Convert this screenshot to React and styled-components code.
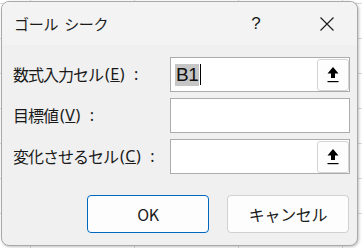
import React from 'react';
import styled, { createGlobalStyle } from 'styled-components';

const GlobalStyle = createGlobalStyle`
  html, body {
    margin: 0;
    padding: 0;
  }
  body {
    font-family: "Noto Sans CJK JP", "Noto Sans", sans-serif;
    color: #1a1a1a;
  }
`;

const Desktop = styled.div`
  width: 362px;
  height: 248px;
  box-sizing: border-box;
  padding: 1px 0 0 1px;
  background-color: #ffffff;
  background-image:
    repeating-linear-gradient(90deg, transparent 0 30px, #dadada 30px 31px, transparent 31px 104px),
    repeating-linear-gradient(0deg, transparent 0 34px, #dadada 34px 35px);
  overflow: hidden;
`;

const Window = styled.div`
  width: 357px;
  height: 245px;
  box-sizing: border-box;
  border: 1px solid #a9a9a9;
  border-radius: 8px;
  overflow: hidden;
  display: flex;
  flex-direction: column;
  background: #f0f0f0;
  box-shadow: 1px 1px 3px rgba(0, 0, 0, 0.25);
`;

const TitleBar = styled.div`
  height: 43px;
  flex: none;
  display: flex;
  align-items: center;
  background: #f3f3f3;
  padding-left: 12px;
`;

const Title = styled.div`
  flex: 1;
  font-size: 15px;
  word-spacing: 3px;
  letter-spacing: -0.3px;
  color: #1a1a1a;
`;

const HelpMark = styled.div`
  width: 20px;
  margin-right: 53px;
  text-align: center;
  font-family: "Liberation Sans", sans-serif;
  font-size: 17px;
  color: #1a1a1a;
`;

const CloseIcon = styled.svg`
  width: 16px;
  height: 16px;
  margin-right: 22px;
  display: block;
`;

const Body = styled.div`
  flex: 1;
  display: flex;
  flex-direction: column;
  padding: 12px 7px 0 11px;
`;

const Form = styled.div`
  display: grid;
  grid-template-columns: 1fr 180px;
  grid-auto-rows: 35px;
  row-gap: 6px;
`;

const Label = styled.label`
  display: flex;
  align-items: center;
  font-size: 16px;
  color: #1a1a1a;
  white-space: nowrap;
  padding-bottom: 1px;
`;

const Text = styled.span`
  letter-spacing: -1px;
`;

const Paren = styled.span`
  font-family: "Noto Sans", sans-serif;
  font-size: 16px;
  margin-left: 2px;
  letter-spacing: 0.5px;
`;

const Colon = styled.span`
  font-family: "Noto Sans", sans-serif;
  margin-left: 9px;
`;

const Field = styled.div`
  box-sizing: border-box;
  border: 1px solid #acacac;
  background: #ffffff;
  display: flex;
  align-items: center;
  padding: 0 0 0 4px;
`;

const Value = styled.div`
  flex: 1;
  display: flex;
  align-items: center;
  height: 100%;
`;

const Selected = styled.span`
  background: #c6c6c6;
  font-family: "Liberation Sans", sans-serif;
  font-size: 19px;
  line-height: 22px;
  padding: 0 1px;
  letter-spacing: -0.5px;
  color: #111;
`;

const Caret = styled.span`
  width: 1px;
  height: 21px;
  margin-left: 1px;
  background: #000;
`;

const RefButton = styled.button`
  width: 32px;
  height: 32px;
  box-sizing: border-box;
  border: 1px solid #d4d4d4;
  border-radius: 3px;
  background: #fdfdfd;
  display: flex;
  align-items: center;
  justify-content: center;
  padding: 0;
`;

const Actions = styled.div`
  display: flex;
  justify-content: flex-end;
  gap: 18px;
  margin-top: 21px;
  padding-right: 1px;
`;

const Button = styled.button`
  width: 122px;
  height: 38px;
  box-sizing: border-box;
  border: 1px solid ${(p) => (p.$primary ? '#0067c0' : '#d0d0d0')};
  border-radius: 4px;
  background: #fdfdfd;
  font-family: "Noto Sans CJK JP", "Noto Sans", sans-serif;
  font-size: 16px;
  letter-spacing: -0.3px;
  color: #1a1a1a;
  padding: 0;
`;

const UpArrow = () => (
  <svg width="14" height="18" viewBox="0 0 14 18">
    <path d="M7 1 L12.5 7.5 L9 7.5 L9 12 L5 12 L5 7.5 L1.5 7.5 Z" fill="#000" />
    <rect x="1.5" y="15" width="11" height="1.2" fill="#000" />
  </svg>
);

const rows = [
  { label: '数式入力セル', key: 'E', value: 'B1', ref: true },
  { label: '目標値', key: 'V', ref: false },
  { label: '変化させるセル', key: 'C', ref: true },
];

export default function App() {
  return (
    <>
      <GlobalStyle />
      <Desktop>
        <Window>
          <TitleBar>
            <Title>ゴール シーク</Title>
            <HelpMark>?</HelpMark>
            <CloseIcon viewBox="0 0 16 16">
              <path d="M1.5 1.5 L14.5 14.5 M14.5 1.5 L1.5 14.5" stroke="#1a1a1a" strokeWidth="1.1" />
            </CloseIcon>
          </TitleBar>
          <Body>
            <Form>
              {rows.map((row) => (
                <React.Fragment key={row.key}>
                  <Label>
                    <Text>{row.label}</Text>
                    <Paren>
                      (<u>{row.key}</u>)
                    </Paren>
                    <Colon>:</Colon>
                  </Label>
                  <Field>
                    <Value>
                      {row.value && (
                        <>
                          <Selected>{row.value}</Selected>
                          <Caret />
                        </>
                      )}
                    </Value>
                    {row.ref && (
                      <RefButton>
                        <UpArrow />
                      </RefButton>
                    )}
                  </Field>
                </React.Fragment>
              ))}
            </Form>
            <Actions>
              <Button $primary>OK</Button>
              <Button>キャンセル</Button>
            </Actions>
          </Body>
        </Window>
      </Desktop>
    </>
  );
}
